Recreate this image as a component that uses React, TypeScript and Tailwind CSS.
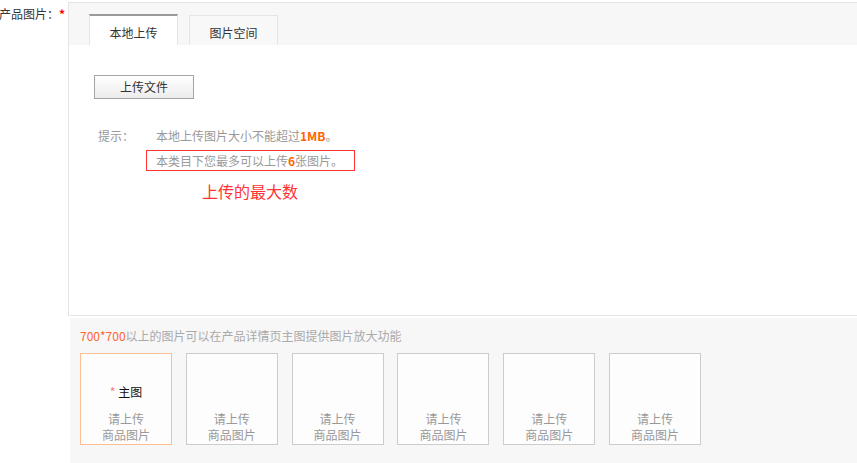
import React from "react";

const font = { fontFamily: '"Noto Sans CJK SC", "Liberation Sans", sans-serif' };

function Slot({ main }: { main?: boolean }) {
  return (
    <div
      className={`w-[92px] h-[92px] shrink-0 border bg-[#fdfdfd] flex flex-col items-center justify-end pb-[1px] text-[12px] leading-[16px] text-[#999] ${
        main ? "border-[#fbbf93]" : "border-[#cccccc]"
      }`}
    >
      {main && (
        <div className="mb-[11px] text-[#111]">
          <span className="text-[#f77]">*</span> 主图
        </div>
      )}
      <div>请上传</div>
      <div>商品图片</div>
    </div>
  );
}

export default function App() {
  return (
    <div className="w-[857px] h-[463px] bg-white flex overflow-hidden" style={font}>
      <div className="w-[68px] shrink-0 flex justify-end pt-[6px] h-[24px] whitespace-nowrap text-[12px] leading-[16px] text-[#333]">
        <span>产品图片：</span>
        <span className="text-[#f00] font-bold pr-[3px]">*</span>
      </div>
      <div className="flex-1 pt-[2px] flex flex-col">
        <div className="h-[314px] border-l border-t border-b border-[#e5e5e5] flex flex-col">
          <div className="h-[42px] bg-[#f7f7f7] flex items-end pl-[20px] gap-[11px] shrink-0 text-[12px] leading-[16px] text-[#333]">
            <div className="w-[89px] h-[31px] bg-white border-t-2 border-t-[#9a9a9a] border-x border-x-[#e5e5e5] text-center pt-[9px]">
              本地上传
            </div>
            <div className="w-[89px] h-[30px] bg-[#f8f8f8] border-t border-x border-[#e5e5e5] text-center pt-[9px]">
              图片空间
            </div>
          </div>
          <div className="flex-1 bg-white pl-[25px] pt-[30px]">
            <button className="block w-[100px] h-[24px] border border-[#a5a5a5] bg-gradient-to-b from-white to-[#ececec] text-[12px] text-[#333] leading-[16px]" style={font}>
              上传文件
            </button>
            <div className="flex mt-[29px] text-[12px] leading-[16px] text-[#999]">
              <div className="w-[62px] pl-[4px] shrink-0">提示：</div>
              <div className="flex flex-col">
                <div>
                  本地上传图片大小不能超过<span className="font-bold text-[#f60]">1MB</span>。
                </div>
                <div className="-ml-[10px] mt-[6px] w-[209px] h-[21px] border border-[#f33] pl-[9px] flex items-center">
                  <span>
                    本类目下您最多可以上传<span className="font-bold text-[#f60]">6</span>张图片。
                  </span>
                </div>
                <div className="mt-[10px] ml-[46px] text-[16px] leading-[20px] text-[#f33]">上传的最大数</div>
              </div>
            </div>
          </div>
        </div>
        <div className="flex-1 ml-[2px] mt-[2px] bg-[#f7f7f7] pl-[10px] pt-[10px]">
          <div className="text-[12px] leading-[16px] text-[#aaa]">
            <span className="text-[#f63]">700*700</span>以上的图片可以在产品详情页主图提供图片放大功能
          </div>
          <div className="flex gap-[13.8px] mt-[9px]">
            <Slot main />
            <Slot />
            <Slot />
            <Slot />
            <Slot />
            <Slot />
          </div>
        </div>
      </div>
    </div>
  );
}
